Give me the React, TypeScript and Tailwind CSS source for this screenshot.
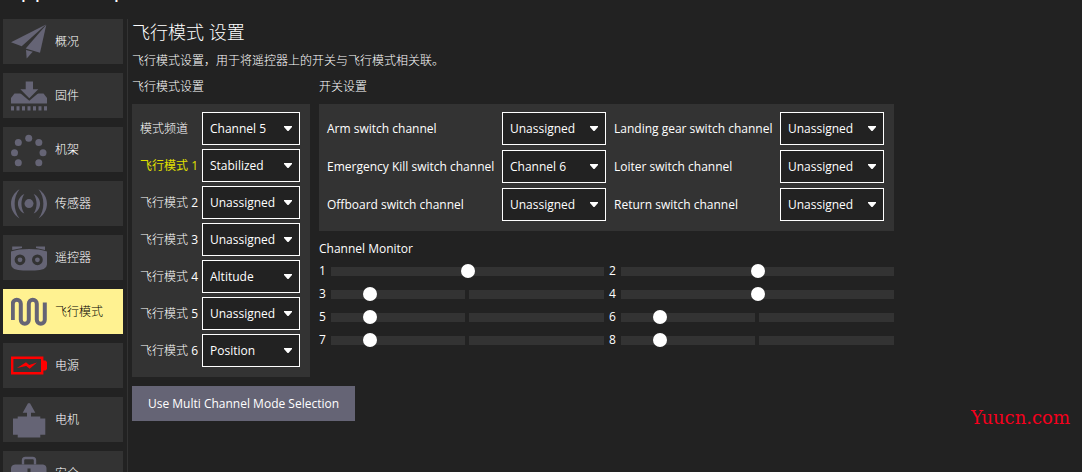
import React, { useState } from 'react';

const UNASSIGNED = 'Unassigned';
const CHANNELS = [UNASSIGNED, 'Channel 5', 'Channel 6', 'Channel 7', 'Channel 8'];
const MODES = [UNASSIGNED, 'Stabilized', 'Altitude', 'Position', 'Mission', 'Hold', 'Return'];

interface IconProps {
    children: React.ReactNode;
}

const Icon: React.FC<IconProps> = ({ children }) => (
    <svg className="h-9 w-9 shrink-0" viewBox="0 0 36 36" fill="currentColor" aria-hidden="true">
        {children}
    </svg>
);

const menu = [
    {
        label: '概况',
        icon: (
            <Icon>
                <path d="M0 18.2 35 .5 10.7 22.2z" />
                <path d="M35.3.8 29 28.8l-14.3-4.3z" />
                <path d="M15 26l6.7 1.8-6 6.7z" />
            </Icon>
        ),
    },
    {
        label: '固件',
        icon: (
            <Icon>
                <path d="M3.5 15.5h29L36 20v5.5H0V20z" />
                <path d="M7 13.2l11.3 9.6 11.3-9.6z" fill="#333" />
                <path d="M14.7 3.5H22v7.7h5.3l-9 9-8.9-9h5.3z" />
                <path d="M0 28.2h3v4.3H0zM5.5 28.2h3v4.3h-3zM11 28.2h3v4.3h-3zM16.5 28.2h3v4.3h-3zM22 28.2h3v4.3h-3zM27.5 28.2h3v4.3h-3zM33 28.2h3v4.3h-3z" />
            </Icon>
        ),
    },
    {
        label: '机架',
        icon: (
            <Icon>
                <circle cx="17.7" cy="6.2" r="3.5" />
                <circle cx="7.3" cy="10.5" r="3.5" />
                <circle cx="27.8" cy="10.5" r="3.5" />
                <circle cx="3.5" cy="20.8" r="3.5" />
                <circle cx="32" cy="20.8" r="3.5" />
                <circle cx="7.3" cy="30.8" r="3.5" />
                <circle cx="27.8" cy="30.8" r="3.5" />
            </Icon>
        ),
    },
    {
        label: '传感器',
        icon: (
            <Icon>
                <circle cx="18" cy="17.6" r="4.5" />
                <path d="M8.5 3.2C-2.8 10-2.8 25.4 8.5 32.4 2 24.5 2 11 8.5 3.2zM13.3 8C4.8 12 4.8 23.2 13.3 27.4 9.5 21.5 9.5 14 13.3 8z" />
                <path d="M27.5 3.2c11.3 6.8 11.3 22.2 0 29.2C34 24.5 34 11 27.5 3.2zM22.7 8c8.5 4 8.5 15.2 0 19.4C26.5 21.5 26.5 14 22.7 8z" />
            </Icon>
        ),
    },
    {
        label: '遥控器',
        icon: (
            <Icon>
                <path d="M1.2 6.5H11V8L1.2 10zM25 6.5h9V10L25 8z" />
                <path d="M0 11.5c9-3.3 27-3.3 36 0v13c-1 6.5-10 6-18 6s-17 .5-18-6z" />
                <g fill="none" stroke="#333" strokeWidth="3">
                    <circle cx="9" cy="19.8" r="3.9" />
                    <circle cx="26.4" cy="19.8" r="3.9" />
                </g>
            </Icon>
        ),
    },
    {
        label: '飞行模式',
        icon: (
            <Icon>
                <path
                    d="M1.8 26V9.7a4 4 0 0 1 8 0v16a4 4 0 0 0 8 0v-16a4 4 0 0 1 8 0v16a4 4 0 0 0 8 0V8.5"
                    fill="none"
                    stroke="currentColor"
                    strokeWidth="4"
                />
            </Icon>
        ),
    },
    {
        label: '电源',
        icon: (
            <Icon>
                <path d="M1.2 9.7h30v15.6h-30z" fill="none" stroke="#f00" strokeWidth="2.4" />
                <path d="M32 12.5h2.5L36 14v7l-1.5 1.5H32zM6 20l9-5.7 3.2 2.6 7.8-2.4-7.3 6.3-3.5-2.9z" fill="#f00" />
            </Icon>
        ),
    },
    {
        label: '电机',
        icon: (
            <Icon>
                <path d="M17 1.2h2l5.3 9.6H20v3.7h9.3v2h5v16.3h-5v2.7H6.7v-2.7H2V16.5h4.7v-2H16v-3.7h-4.3z" />
            </Icon>
        ),
    },
    {
        label: '安全',
        icon: (
            <Icon>
                <path d="M12 8.5V4.3Q12 2 14.3 2h7.4Q24 2 24 4.3v4.2" fill="none" stroke="currentColor" strokeWidth="2.4" />
                <path d="M4 8.5h28q3.5.5 3.5 4V33H0V12.5q0-3.5 4-4zM16.5 12.5v5h-5v3h5v5h3v-5h5v-3h-5v-5z" fillRule="evenodd" />
            </Icon>
        ),
    },
];

const flightModes = ['Stabilized', UNASSIGNED, UNASSIGNED, 'Altitude', UNASSIGNED, 'Position'];

const switches = [
    { id: 'arm', label: 'Arm switch channel', value: UNASSIGNED },
    { id: 'gear', label: 'Landing gear switch channel', value: UNASSIGNED },
    { id: 'kill', label: 'Emergency Kill switch channel', value: 'Channel 6' },
    { id: 'loiter', label: 'Loiter switch channel', value: UNASSIGNED },
    { id: 'offboard', label: 'Offboard switch channel', value: UNASSIGNED },
    { id: 'return', label: 'Return switch channel', value: UNASSIGNED },
];

// PWM values for channels 1-8
const monitor = [1500, 1500, 1124, 1500, 1124, 1124, 1124, 1124];

interface SelectProps {
    id: string;
    value: string;
    options: string[];
}

const Select: React.FC<SelectProps> = ({ id, value, options }) => (
    <div className="relative">
        <select
            id={id}
            defaultValue={value}
            className="block h-[33px] w-full appearance-none border border-white bg-[#222] pl-[7px] pr-5 text-xs text-white"
        >
            {options.map((option) => (
                <option key={option}>{option}</option>
            ))}
        </select>
        <svg
            className="pointer-events-none absolute right-2 top-3.5 h-[5px] w-2"
            viewBox="0 0 8 5"
            fill="#fff"
            aria-hidden="true"
        >
            <path d="M0 0h8v1L4.5 5h-1L0 1z" />
        </svg>
    </div>
);

export default function App() {
    const [active, setActive] = useState('飞行模式');

    return (
        <div className="relative flex h-screen flex-col overflow-hidden bg-[#222] font-['Open_Sans','Noto_Sans_CJK_SC',sans-serif] text-xs leading-4 text-white">
            {/* Toolbar title, scrolled almost out of view */}
            <header className="flex h-0.5 shrink-0 items-end overflow-hidden pl-1.5 text-[23px] leading-6">
                Apps Setup
            </header>

            <div className="flex min-h-0 flex-1 pt-[17px]">
                {/* Sidebar */}
                <nav className="flex w-32 shrink-0 flex-col gap-[9px] border-r border-[#333] pl-[3px] pr-1">
                    {menu.map((item) => (
                        <button
                            key={item.label}
                            onClick={() => setActive(item.label)}
                            className={
                                active === item.label
                                    ? 'flex h-[45px] shrink-0 items-center gap-2 bg-[#fff291] px-2 font-light text-black'
                                    : 'flex h-[45px] shrink-0 items-center gap-2 bg-[#333] px-2 font-light text-white'
                            }
                        >
                            <span className="text-[#656475]">{item.icon}</span>
                            {item.label}
                        </button>
                    ))}
                </nav>

                <main className="min-w-0 flex-1 pl-1">
                    <h1 className="text-lg leading-[26px] font-light">飞行模式 设置</h1>
                    <p className="mt-2 font-light">飞行模式设置，用于将遥控器上的开关与飞行模式相关联。</p>

                    <div className="mt-2.5 flex items-start gap-[9px]">
                        {/* Flight modes */}
                        <section className="w-[178px] shrink-0">
                            <h2 className="font-light">飞行模式设置</h2>
                            <div className="mt-[9px] grid grid-cols-[62px_1fr] items-center gap-y-1 bg-[#333] pb-2.5 pl-2 pr-2.5 pt-2">
                                <label htmlFor="mode-channel" className="font-light">模式频道</label>
                                <Select id="mode-channel" value="Channel 5" options={CHANNELS} />
                                {flightModes.map((mode, i) => (
                                    <React.Fragment key={i}>
                                        <label
                                            htmlFor={`mode-${i}`}
                                            className={i === 0 ? 'whitespace-nowrap text-[#e0e000]' : 'whitespace-nowrap font-light'}
                                        >
                                            飞行模式 <span className="font-normal">{i + 1}</span>
                                        </label>
                                        <Select id={`mode-${i}`} value={mode} options={MODES} />
                                    </React.Fragment>
                                ))}
                            </div>
                            <button className="mt-[9px] h-[35px] whitespace-nowrap bg-[#656475] px-4">
                                Use Multi Channel Mode Selection
                            </button>
                        </section>

                        <section>
                            {/* Switches */}
                            <h2 className="font-light">开关设置</h2>
                            <div className="mt-[9px] grid grid-cols-[175px_104px_174px_104px] items-center gap-y-[5px] bg-[#333] pb-2.5 pl-2 pr-2.5 pt-2">
                                {switches.map((item, i) => (
                                    <React.Fragment key={item.id}>
                                        <label htmlFor={item.id} className={i % 2 ? 'pl-2 whitespace-nowrap' : 'whitespace-nowrap'}>
                                            {item.label}
                                        </label>
                                        <Select id={item.id} value={item.value} options={CHANNELS} />
                                    </React.Fragment>
                                ))}
                            </div>

                            {/* Channel monitor */}
                            <h2 className="mt-2.5">Channel Monitor</h2>
                            <div className="mt-1.5 grid grid-cols-2 gap-x-[5px] gap-y-[7px]">
                                {monitor.map((value, i) => (
                                    <div key={i} className="flex items-center">
                                        <label htmlFor={`rc-${i}`} className="w-3 shrink-0">{i + 1}</label>
                                        <input
                                            id={`rc-${i}`}
                                            type="range"
                                            min={1000}
                                            max={2000}
                                            value={value}
                                            readOnly
                                            className="h-[15px] min-w-0 flex-1 appearance-none bg-[linear-gradient(to_right,#333_calc(50%-2px),#222_calc(50%-2px),#222_calc(50%+2px),#333_calc(50%+2px))] bg-[length:100%_9px] bg-center bg-no-repeat [&::-webkit-slider-thumb]:h-3.5 [&::-webkit-slider-thumb]:w-3.5 [&::-webkit-slider-thumb]:appearance-none [&::-webkit-slider-thumb]:rounded-full [&::-webkit-slider-thumb]:bg-white"
                                        />
                                    </div>
                                ))}
                            </div>
                        </section>
                    </div>
                </main>
            </div>

            <span className="absolute bottom-11 right-3 font-['DejaVu_Serif',serif] text-lg leading-5 text-[#f5001d]">
                Yuucn.com
            </span>
        </div>
    );
}
